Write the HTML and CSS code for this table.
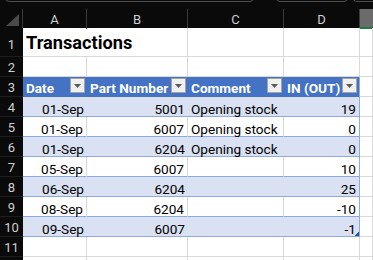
FILE: index.html
```html
<!DOCTYPE html>
<html>
<head>
<meta charset="utf-8">
<link rel="stylesheet" href="styles.css">
</head>
<body>
<div class="top">
  <span class="tb tb1"></span><span class="tb tb2"></span><span class="tb tb3"></span>
</div>
<div class="sheet">
  <div class="row colhdr">
    <div class="corner"><svg width="14" height="13" viewBox="0 0 14 13"><polygon points="13,0 13,12 0,12" fill="#4a4a4a"/></svg></div>
    <div class="ch">A</div>
    <div class="ch">B</div>
    <div class="ch">C</div>
    <div class="ch">D</div>
    <div class="ch sel"></div>
  </div>
  <div class="row r1">
    <div class="rh">1</div>
    <div class="c title span2">Transactions</div>
    <div class="c"></div>
    <div class="c"></div>
    <div class="c"></div>
  </div>
  <div class="row">
    <div class="rh">2</div>
    <div class="c"></div><div class="c"></div><div class="c"></div><div class="c"></div><div class="c"></div>
  </div>
  <div class="row">
    <div class="rh">3</div>
    <div class="th"><span>Date</span><span class="fb"><svg width="7" height="4" viewBox="0 0 7 4"><polygon points="0,0 7,0 3.5,4" fill="#5a5a5a"/></svg></span></div>
    <div class="th"><span>Part Number</span><span class="fb"><svg width="7" height="4" viewBox="0 0 7 4"><polygon points="0,0 7,0 3.5,4" fill="#5a5a5a"/></svg></span></div>
    <div class="th"><span>Comment</span><span class="fb"><svg width="7" height="4" viewBox="0 0 7 4"><polygon points="0,0 7,0 3.5,4" fill="#5a5a5a"/></svg></span></div>
    <div class="th last"><span>IN (OUT)</span><span class="fb"><svg width="7" height="4" viewBox="0 0 7 4"><polygon points="0,0 7,0 3.5,4" fill="#5a5a5a"/></svg></span></div>
    <div class="c"></div>
  </div>
  <div class="row band">
    <div class="rh">4</div>
    <div class="td num">01-Sep</div><div class="td num">5001</div><div class="td">Opening stock</div><div class="td num last">19</div><div class="c"></div>
  </div>
  <div class="row plain">
    <div class="rh">5</div>
    <div class="td num">01-Sep</div><div class="td num">6007</div><div class="td">Opening stock</div><div class="td num last">0</div><div class="c"></div>
  </div>
  <div class="row band">
    <div class="rh">6</div>
    <div class="td num">01-Sep</div><div class="td num">6204</div><div class="td">Opening stock</div><div class="td num last">0</div><div class="c"></div>
  </div>
  <div class="row plain">
    <div class="rh">7</div>
    <div class="td num">05-Sep</div><div class="td num">6007</div><div class="td"></div><div class="td num last">10</div><div class="c"></div>
  </div>
  <div class="row band">
    <div class="rh">8</div>
    <div class="td num">06-Sep</div><div class="td num">6204</div><div class="td"></div><div class="td num last">25</div><div class="c"></div>
  </div>
  <div class="row plain">
    <div class="rh">9</div>
    <div class="td num">08-Sep</div><div class="td num">6204</div><div class="td"></div><div class="td num last">-10</div><div class="c"></div>
  </div>
  <div class="row band">
    <div class="rh">10</div>
    <div class="td num">09-Sep</div><div class="td num">6007</div><div class="td"></div><div class="td num last end">-1<span class="grip"></span></div><div class="c"></div>
  </div>
  <div class="row">
    <div class="rh">11</div>
    <div class="c"></div><div class="c"></div><div class="c"></div><div class="c"></div><div class="c"></div>
  </div>
  <div class="row short">
    <div class="rh"></div>
    <div class="c"></div><div class="c"></div><div class="c"></div><div class="c"></div><div class="c"></div>
  </div>
</div>
</body>
</html>
```
FILE: styles.css
```css
html, body {
  margin: 0;
  padding: 0;
  background: #0a0a0a;
  overflow: hidden;
}
body {
  width: 373px;
  height: 260px;
  font-family: Roboto, "Liberation Sans", sans-serif;
}
.top {
  height: 9px;
  position: relative;
  overflow: hidden;
  background: #0a0a0a;
}
.tb {
  position: absolute;
  top: -10px;
  height: 12px;
  box-sizing: border-box;
  border: 1px solid #4d4d4d;
  border-radius: 4px;
}
.tb1 { left: 5px; width: 249px; }
.tb2 { left: 276px; width: 72px; }
.tb3 { left: 353px; width: 20px; border-right: none; border-radius: 4px 0 0 4px; }

.sheet {
  background: #fff;
  height: 251px;
  overflow: hidden;
}
.row {
  display: grid;
  grid-template-columns: 23px 64px 101px 96px 76px 13px;
  height: 20px;
}
.row.short {
  height: 4px;
}
.row > div {
  box-sizing: border-box;
  min-width: 0;
}
.colhdr {
  height: 19px;
  background: #0a0a0a;
}
.corner {
  display: flex;
  align-items: flex-end;
  justify-content: flex-end;
  padding: 0 2px 2px 0;
  border-right: 1px solid #3a3a3a;
}
.ch {
  color: #cfcfcf;
  font-size: 13px;
  text-align: center;
  line-height: 19px;
  padding-top: 1px;
  border-right: 1px solid #3a3a3a;
}
.ch.sel {
  background: #6b6b6b;
  border-bottom: 2px solid #1f7a46;
  border-right: none;
}
.r1 {
  height: 29px;
}
.rh {
  background: #0a0a0a;
  color: #cfcfcf;
  font-size: 13px;
  text-align: center;
  border-bottom: 1px solid #1e1e1e;
  display: flex;
  align-items: flex-end;
  justify-content: center;
  padding-bottom: 1px;
  line-height: 14px;
}
.r1 .rh { padding-bottom: 4px; }
.c {
  border-right: 1px solid #d9d9d9;
  border-bottom: 1px solid #d9d9d9;
}
.span2 {
  grid-column: span 2;
}
.title {
  font-weight: bold;
  font-size: 18.2px;
  color: #000;
  padding-left: 3px;
  display: flex;
  align-items: flex-end;
  padding-bottom: 4px;
  line-height: 18px;
}
.th {
  background: #4472c4;
  color: #fff;
  font-weight: bold;
  font-size: 13.6px;
  display: flex;
  align-items: flex-end;
  justify-content: space-between;
  padding: 0 2px 2px 3px;
  line-height: 14px;
  white-space: nowrap;
}
.th.last {
  border-right: 1px solid #8ea9db;
}
.fb {
  align-self: flex-start;
  margin-top: 1px;
  width: 15px;
  height: 15px;
  box-sizing: border-box;
  border: 1px solid #a3a3a3;
  background: #f0f0f0;
  display: flex;
  align-items: center;
  justify-content: center;
}
.fb svg { display: block; margin-top: 1px; }
.td {
  font-size: 13.6px;
  color: #000;
  border-bottom: 1px solid #8ea9db;
  display: flex;
  align-items: flex-end;
  padding: 0 3px 0 3px;
  line-height: 14px;
  white-space: nowrap;
}
.td.num {
  justify-content: flex-end;
}
.band .td {
  background: #d9e1f2;
}
.plain .td {
  background: #fff;
  border-right: 1px solid #d9d9d9;
}
.td.last, .plain .td.last {
  border-right: 1px solid #8ea9db;
}
.end {
  position: relative;
}
.grip {
  position: absolute;
  right: 0;
  bottom: 0;
  width: 4px;
  height: 4px;
  background: linear-gradient(135deg, transparent 50%, #2b4fa8 50%);
}
```
